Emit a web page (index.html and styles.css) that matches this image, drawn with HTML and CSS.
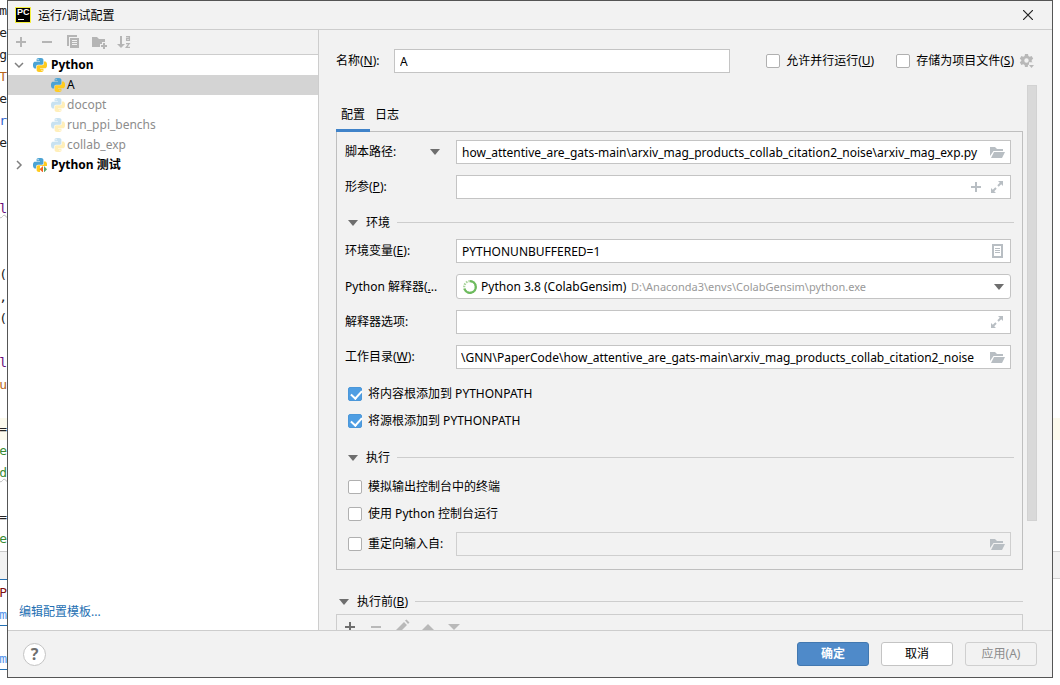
FILE: index.html
```html
<!DOCTYPE html>
<html lang="zh-CN">
<head>
<meta charset="utf-8">
<title>运行/调试配置</title>
<link rel="stylesheet" href="styles.css">
</head>
<body>
<svg class="sprite" aria-hidden="true">
  <symbol id="python" viewBox="0 0 24 24">
    <path fill="#4ba3d3" d="M14.25.18l.9.2.73.26.59.3.45.32.34.34.25.34.16.33.1.3.04.26.02.2-.01.13V8.5l-.05.63-.13.55-.21.46-.26.38-.3.31-.33.25-.35.19-.35.14-.33.1-.3.07-.26.04-.21.02H8.77l-.69.05-.59.14-.5.22-.41.27-.33.32-.27.35-.2.36-.15.37-.1.35-.07.32-.04.27-.02.21v3.06H3.17l-.21-.03-.28-.07-.32-.12-.35-.18-.36-.26-.36-.36-.35-.46-.32-.59-.28-.73-.21-.88-.14-1.05-.05-1.23.06-1.22.16-1.04.24-.87.32-.71.36-.57.4-.44.42-.33.42-.24.4-.16.36-.1.32-.05.24-.01h.16l.06.01h8.16v-.83H6.18l-.01-2.75-.02-.37.05-.34.11-.31.17-.28.25-.26.31-.23.38-.2.44-.18.51-.15.58-.12.64-.1.71-.06.77-.04.84-.02 1.27.05zm-6.3 1.98l-.23.33-.08.41.08.41.23.34.33.22.41.09.41-.09.33-.22.23-.34.08-.41-.08-.41-.23-.33-.33-.22-.41-.09-.41.09z"/>
    <path fill="#ffcb1f" d="M21.1 6.11l.28.06.32.12.35.18.36.27.36.35.35.47.32.59.28.73.21.88.14 1.04.05 1.23-.06 1.23-.16 1.04-.24.86-.32.71-.36.57-.4.45-.42.33-.42.24-.4.16-.36.09-.32.05-.24.02-.16-.01h-8.22v.82h5.84l.01 2.76.02.36-.05.34-.11.31-.17.29-.25.25-.31.24-.38.2-.44.17-.51.15-.58.13-.64.09-.71.07-.77.04-.84.01-1.27-.04-1.07-.14-.9-.2-.73-.25-.59-.3-.45-.33-.34-.34-.25-.34-.16-.33-.1-.3-.04-.25-.02-.2.01-.13v-5.34l.05-.64.13-.54.21-.46.26-.38.3-.32.33-.24.35-.2.35-.14.33-.1.3-.06.26-.04.21-.02.13-.01h5.84l.69-.05.59-.14.5-.21.41-.28.33-.32.27-.35.2-.36.15-.36.1-.35.07-.32.04-.28.02-.21V6.07h2.09l.14.01zm-6.47 14.25l-.23.33-.08.41.08.41.23.33.33.23.41.08.41-.08.33-.23.23-.33.08-.41-.08-.41-.23-.33-.33-.23-.41-.08-.41.08z"/>
  </symbol>
  <symbol id="plus" viewBox="0 0 16 16"><path fill="currentColor" d="M7 3h2v4h4v2H9v4H7V9H3V7h4z"/></symbol>
  <symbol id="minus" viewBox="0 0 16 16"><path fill="currentColor" d="M3 7h10v2H3z"/></symbol>
  <symbol id="folder" viewBox="0 0 16 16"><path fill="currentColor" d="M1 3h5l2 2h6v2H4.500L1 12zM5 8h11l-3 6H2z"/></symbol>
  <symbol id="expand" viewBox="0 0 16 16"><path fill="currentColor" d="M9 2h5v5l-1.800-1.800L9.700 7.700 8.300 6.300l2.500-2.500zM2 9l1.800 1.800 2.500-2.500 1.400 1.400-2.500 2.500L7 14H2z"/></symbol>
  <symbol id="down" viewBox="0 0 10 6"><path fill="currentColor" d="M0 0h10L5 6z"/></symbol>
</svg>

<div class="desktop">
  <div class="editor" aria-hidden="true">
    <span>m</span><span>e</span><span>g</span><span class="c-orange">T</span><span>e</span><span class="c-blue">r</span><span>e</span><span></span><span></span><span class="c-purple wavy">l</span><span></span><span></span><span>(</span><span>,</span><span>(</span><span></span><span class="c-purple">l</span><span class="c-orange">u</span><span></span><span class="current">=</span><span class="c-green">e</span><span class="c-green wavy">d</span><span></span><span>=</span><span class="c-green">e</span>
    <div class="editor-bar"></div>
    <span class="c-red">P</span><span class="c-link">m</span><span></span><span class="c-link">m</span>
  </div>

  <main class="dialog">
    <header class="titlebar">
      <span class="logo">PC</span>
      <h1>运行/调试配置</h1>
      <button class="close" aria-label="关闭"><svg viewBox="0 0 10 10" width="10" height="10"><path d="M0 0l10 10M10 0L0 10" stroke="#222" stroke-width="1.200"/></svg></button>
    </header>

    <div class="content">
      <aside class="sidebar">
        <div class="toolbar">
          <button aria-label="添加"><svg class="i16"><use href="#plus"/></svg></button>
          <button aria-label="移除"><svg class="i16"><use href="#minus"/></svg></button>
          <button aria-label="复制"><svg class="i16" viewBox="0 0 16 16"><path fill="currentColor" d="M2 1h10v2H4v9H2zM5 4h9v10H5zm2 2v1h5V6zm0 2v1h5V8zm0 2v1h5v-1z" fill-rule="evenodd"/></svg></button>
          <button aria-label="新建文件夹"><svg class="i16" viewBox="0 0 16 16"><path fill="currentColor" d="M1 3h5l2 2h6v3h-3v2H9v3H1zM12 9h2v2h2v2h-2v2h-2v-2h-2v-2h2z"/></svg></button>
          <button aria-label="排序"><svg class="i16" viewBox="0 0 16 16"><path fill="currentColor" d="M3 2h2v8h3l-4 4-4-4h3z"/><path fill="none" stroke="currentColor" stroke-width="1.300" d="M9 2.600h3.400V7M12.400 4.400H9.600v2h2.800M9 9.600h3.200L9.300 13.400H13"/></svg></button>
        </div>
        <ul class="tree">
          <li class="group"><svg class="chevron" viewBox="0 0 10 10"><path d="M1 3l4 4 4-4"/></svg><svg class="py"><use href="#python"/></svg>Python</li>
          <li class="leaf selected"><svg class="py"><use href="#python"/></svg>A</li>
          <li class="leaf temp"><svg class="py"><use href="#python"/></svg>docopt</li>
          <li class="leaf temp"><svg class="py"><use href="#python"/></svg>run_ppi_benchs</li>
          <li class="leaf temp"><svg class="py"><use href="#python"/></svg>collab_exp</li>
          <li class="group"><svg class="chevron" viewBox="0 0 10 10"><path d="M3 1l4 4-4 4"/></svg><svg class="py" viewBox="0 0 14 14"><use href="#python" width="14" height="14"/><path fill="#fff" d="M7 8h7v6H7z"/><path fill="#f26522" d="M10 8v6.500L6.500 11.200z"/><path fill="#59a869" d="M11 8v6.500l3-3.300z"/></svg>Python 测试</li>
        </ul>
        <a class="templates" href="#">编辑配置模板...</a>
      </aside>

      <form class="settings" onsubmit="return false">
        <div class="name-row">
          <label for="name">名称(<u>N</u>):</label>
          <div class="field name-field"><input id="name" value="A"></div>
          <label class="check parallel"><input type="checkbox"><span>允许并行运行(<u>U</u>)</span></label>
          <label class="check"><input type="checkbox"><span>存储为项目文件(<u>S</u>)</span></label>
          <button type="button" class="gear" aria-label="存储选项"><svg viewBox="0 0 16 16" width="16" height="16"><path fill="#b8b8b8" fill-rule="evenodd" d="M6 1h3l.4 2 1.300.8 2-.7 1.500 2.600L12.700 7v1.500l1 .8H10v2.200l-1 .4L8.700 14H6l-.4-2-1.300-.8-2 .7L.8 9.300 2.300 8V7L.8 5.700l1.500-2.600 2 .7L5.600 3zM7.500 5.300a2.200 2.200 0 1 0 0 4.400 2.200 2.200 0 0 0 0-4.400z"/><path fill="#b8b8b8" d="M10 12h5l-2.500 3z"/></svg></button>
        </div>

        <div class="viewport">
          <div class="page">
            <div class="tabs" role="tablist">
              <button type="button" role="tab" class="tab active" aria-selected="true">配置</button>
              <button type="button" role="tab" class="tab" aria-selected="false">日志</button>
            </div>
            <div class="panel">
              <div class="row">
                <label for="script">脚本路径:</label>
                <button type="button" class="mode" aria-label="切换类型"><svg class="down"><use href="#down"/></svg></button>
                <div class="field"><input id="script" value="how_attentive_are_gats-main\arxiv_mag_products_collab_citation2_noise\arxiv_mag_exp.py"><button type="button" aria-label="浏览"><svg class="i16"><use href="#folder"/></svg></button></div>
              </div>
              <div class="row">
                <label for="params">形参(<u>P</u>):</label>
                <div class="field"><input id="params"><button type="button" aria-label="插入宏"><svg class="i16"><use href="#plus"/></svg></button><button type="button" aria-label="展开"><svg class="i16"><use href="#expand"/></svg></button></div>
              </div>
              <div class="section"><svg class="down"><use href="#down"/></svg><h2>环境</h2></div>
              <div class="row">
                <label for="env">环境变量(<u>E</u>):</label>
                <div class="field"><input id="env" value="PYTHONUNBUFFERED=1"><button type="button" aria-label="编辑变量"><svg class="i16" viewBox="0 0 16 16"><path fill="currentColor" fill-rule="evenodd" d="M3 1h11v14H3zm2 2v10h7V3zm1 2h5v1H6zm0 2h5v1H6zm0 2h5v1H6z"/></svg></button></div>
              </div>
              <div class="row">
                <label for="sdk">Python 解释器(<u>.</u>..</label>
                <div class="field combo">
                  <svg class="spinner" viewBox="0 0 14 14"><circle cx="7" cy="7" r="5.800" fill="none" stroke="#a9d49b" stroke-width="2.200" stroke-dasharray="1.500 1"/><path d="M7 1.200a5.800 5.800 0 1 1-5.500 7.700" fill="none" stroke="#6cba5d" stroke-width="2.200"/></svg>
                  <select id="sdk"><option>Python 3.8 (ColabGensim)</option></select>
                  <span class="path">D:\Anaconda3\envs\ColabGensim\python.exe</span>
                  <svg class="down"><use href="#down"/></svg>
                </div>
              </div>
              <div class="row">
                <label for="opts">解释器选项:</label>
                <div class="field"><input id="opts"><button type="button" aria-label="展开"><svg class="i16"><use href="#expand"/></svg></button></div>
              </div>
              <div class="row">
                <label for="cwd">工作目录(<u>W</u>):</label>
                <div class="field"><input id="cwd" class="tail" value="\GNN\PaperCode\how_attentive_are_gats-main\arxiv_mag_products_collab_citation2_noise"><button type="button" aria-label="浏览"><svg class="i16"><use href="#folder"/></svg></button></div>
              </div>
              <div class="checks">
                <label class="check"><input type="checkbox" checked><span>将内容根添加到 PYTHONPATH</span></label>
                <label class="check"><input type="checkbox" checked><span>将源根添加到 PYTHONPATH</span></label>
              </div>
              <div class="section"><svg class="down"><use href="#down"/></svg><h2>执行</h2></div>
              <div class="checks run-checks">
                <label class="check"><input type="checkbox"><span>模拟输出控制台中的终端</span></label>
                <label class="check"><input type="checkbox"><span>使用 Python 控制台运行</span></label>
                <div class="row redirect">
                  <label class="check"><input type="checkbox"><span>重定向输入自:</span></label>
                  <div class="field disabled"><input aria-label="重定向输入自" disabled><button type="button" aria-label="浏览" disabled><svg class="i16"><use href="#folder"/></svg></button></div>
                </div>
              </div>
            </div>
            <div class="section before"><svg class="down"><use href="#down"/></svg><h2>执行前(<u>B</u>)</h2></div>
            <div class="tasks">
              <button type="button" class="on" aria-label="添加"><svg class="i16"><use href="#plus"/></svg></button>
              <button type="button" aria-label="移除"><svg class="i16"><use href="#minus"/></svg></button>
              <button type="button" aria-label="编辑"><svg class="i16" viewBox="0 0 16 16"><path fill="currentColor" d="M11 1.500l1.500-1 3 3-1.500 1.500zM10 3l3 3-8 8H2v-3z"/></svg></button>
              <button type="button" aria-label="上移"><svg class="i16" viewBox="0 0 16 16"><path fill="currentColor" d="M8 5l6 6H2z"/></svg></button>
              <button type="button" aria-label="下移"><svg class="i16" viewBox="0 0 16 16"><path fill="currentColor" d="M2 5h12l-6 6z"/></svg></button>
            </div>
          </div>
          <div class="scrollbar"><div class="thumb"></div></div>
        </div>
      </form>
    </div>

    <footer class="footer">
      <button class="help" aria-label="帮助">?</button>
      <button class="btn primary">确定</button>
      <button class="btn">取消</button>
      <button class="btn" disabled>应用(A)</button>
    </footer>
  </main>

  <div class="margin" aria-hidden="true"><div class="margin-line"></div><div class="margin-bar"></div></div>
</div>
</body>
</html>
```

FILE: styles.css
```css
* { box-sizing: border-box; }

body {
  margin: 0;
  background: #fff;
  color: #000;
  font: 12px/16px "Noto Sans", "Noto Sans CJK SC", sans-serif;
}

button, input, select { font: inherit; color: inherit; }
button { display: flex; align-items: center; justify-content: center; padding: 0; border: 0; background: none; }
h1, h2 { margin: 0; font-size: 12px; font-weight: 400; }
svg { flex: none; display: block; }

.sprite { position: absolute; width: 0; height: 0; }
.i16 { width: 16px; height: 16px; }
.down { width: 10px; height: 6px; color: #6e6e6e; }

.desktop {
  display: grid;
  grid-template-columns: 7px minmax(0, 1fr) 7px;
  height: 100vh;
}

/* Editor columns visible either side of the dialog */
.editor { overflow: hidden; font: 13px/22px "DejaVu Sans Mono", monospace; }
.editor span { display: flex; justify-content: flex-end; height: 22px; color: #222; }
.editor .c-orange { color: #b8651b; }
.editor .c-blue { color: #3366cc; }
.editor .c-purple { color: #660e7a; }
.editor .c-green { color: #388a34; }
.editor .c-red { color: #7f1010; }
.editor .c-link { color: #5394ec; border-bottom: 1px solid #2470b3; }
.editor .wavy { text-decoration: underline wavy #bbb 1px; }
.editor .current, .margin-line { background: #fcfaed; }
.editor-bar { height: 29px; margin: 1px 0 2px; border-top: 1px solid #c9c9c9; border-bottom: 1px solid #2470b3; background: #f2f2f2; }
.margin-line { height: 22px; margin-top: 418px; }
.margin-bar { height: 28px; margin-top: 111px; border: solid #d1d1d1; border-width: 1px 0; background: #f2f2f2; }

.dialog {
  display: flex;
  flex-direction: column;
  min-height: 0;
  margin-bottom: 7px;
  border: 1px solid #555;
  background: #f2f2f2;
}

.titlebar { display: flex; align-items: center; height: 29px; padding: 0 18px 0 7px; border-bottom: 1px solid #cdcdcd; }
.titlebar h1 { flex: 1; padding-top: 2px; }
.logo { width: 16px; height: 16px; margin-right: 7px; padding-left: 1px; border: 1px solid #f5f03c; background: #000; color: #fff; font: 700 9px/9px "Liberation Sans", sans-serif; }
.logo::after { content: ""; display: block; width: 6px; height: 1px; margin: 2px 0 0 1px; background: #fff; }
.close { width: 12px; height: 16px; }

.content { display: flex; flex: 1; min-height: 0; }

.sidebar { display: flex; flex-direction: column; width: 311px; border-right: 1px solid #cdcdcd; background: #fff; }
.toolbar { display: flex; gap: 10px; height: 25px; padding-left: 5px; border-bottom: 1px solid #cdcdcd; background: #f2f2f2; color: #b5b5b5; }
.tree { flex: 1; margin: 0; padding: 0; list-style: none; }
.tree li { display: flex; align-items: center; height: 20px; }
.tree .group { padding-left: 6px; font-weight: 700; }
.tree .leaf { padding-left: 43px; }
.tree .selected { background: #d4d4d4; }
.tree .temp { color: #8c8c8c; }
.tree .temp .py { opacity: 0.3; }
.py { width: 14px; height: 14px; margin-right: 2px; }
.group .py { margin-right: 4px; }
.chevron { width: 10px; height: 10px; margin-right: 9px; fill: none; stroke: #7f7f7f; stroke-width: 1.5; }
.templates { padding: 0 11px 10px; color: #2470b3; text-decoration: none; }

.settings { display: flex; flex: 1; flex-direction: column; min-width: 0; }
.name-row { display: flex; align-items: center; height: 55px; padding: 7px 17px 0 17px; }
.name-row > label:first-child { width: 58px; }
.name-field { flex: 1; }
.parallel { margin: 0 22px 0 36px; }
.gear { margin-left: 5px; }

.field { display: flex; flex: 1; align-items: center; gap: 5px; min-width: 0; height: 24px; padding-right: 5px; border: 1px solid #c4c4c4; background: #fff; color: #b8bec3; }
.field input { flex: 1; min-width: 0; height: 22px; padding: 0 0 0 5px; border: 0; outline: 0; background: none; color: #000; }
.field .tail { padding-left: 4px; }
.field.disabled { border-color: #cfcfcf; background: none; }
.combo { height: 25px; padding: 0 6px; border-radius: 3px; gap: 4px; }
.combo select { appearance: none; padding: 0; border: 0; outline: 0; background: none; color: #000; }
.combo .path { flex: 1; color: #999; font-size: 11px; }
.spinner { width: 14px; height: 14px; }

.check { display: flex; align-items: center; gap: 6px; white-space: nowrap; }
.check input { appearance: none; width: 14px; height: 14px; margin: 0; border: 1px solid #b0b0b0; border-radius: 2px; background: #fff; }
.check input:checked { border-color: #4b97d9; background: #4f9ee3; }
.check input:checked::after { content: ""; display: block; width: 5px; height: 9px; margin: 0 0 0 4px; border: solid #fff; border-width: 0 2px 2px 0; transform: rotate(42deg); }

.viewport { display: flex; flex: 1; min-height: 0; overflow: hidden; }
.page { flex: 1; min-width: 0; padding: 18px 4px 0 17px; }
.scrollbar { width: 10px; margin-right: 15px; }
.thumb { height: 80%; border: 1px solid #d2d2d2; background: #d9d9d9; }

.tabs { display: flex; height: 28px; }
.tab { padding: 0 5px 2px; border-bottom: 3px solid transparent; }
.tab.active { z-index: 1; height: 29px; border-color: #4083c9; }

.panel { display: flex; flex-direction: column; gap: 11px; padding: 8px 11px 13px 8px; border: 1px solid #bfbfbf; }
.row { display: flex; align-items: center; }
.row > label { flex: none; width: 111px; white-space: nowrap; }
.row:has(.mode) > label { width: 85px; }
.mode { width: 26px; height: 16px; justify-content: flex-start; }
.section { display: flex; align-items: center; gap: 8px; height: 18px; margin-right: -3px; padding: 7px 0 0 3px; }
.section::after { content: ""; flex: 1; height: 1px; margin-left: -1px; background: #cdcdcd; }
.checks { padding-left: 3px; }
.checks > .check { height: 27px; }
.checks.run-checks { margin-top: -1px; }
.redirect { margin-top: 5px; }
.row.redirect > .check { width: 108px; }
.before { margin: 19px 0 7px; }
.tasks { display: flex; gap: 10px; padding: 4px 5px; border: 1px solid #cdcdcd; color: #b9b9b9; }
.tasks .on { color: #6e6e6e; }

.footer { display: flex; align-items: center; gap: 12px; height: 47px; padding: 0 15px; border-top: 1px solid #cdcdcd; }
.help { width: 23px; height: 23px; margin-right: auto; border: 1px solid #c4c4c4; border-radius: 50%; background: #fff; color: #6e6e6e; font: 700 16px/20px "Noto Sans", sans-serif; }
.btn { width: 72px; height: 24px; border: 1px solid #c4c4c4; border-radius: 3px; background: #fff; }
.btn.primary { border-color: #4278b0; background: #4f8ac9; color: #fff; font-weight: 700; }
.btn:disabled { border-color: #cfcfcf; background: none; color: #8c8c8c; }
```
